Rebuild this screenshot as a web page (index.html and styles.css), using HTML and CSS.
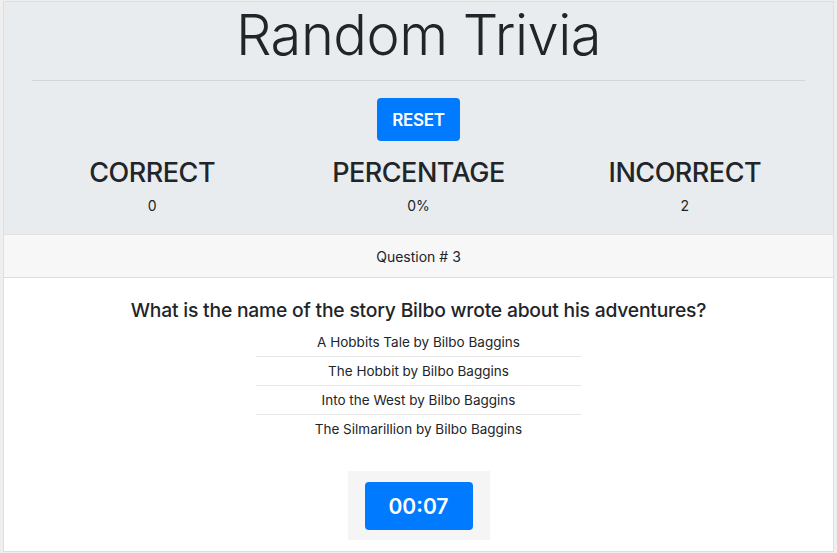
FILE: index.html
```html
<!DOCTYPE html>
<html>
<head>
<meta charset="utf-8">
<link rel="stylesheet" href="styles.css">
</head>
<body>
<div class="card">
  <div class="jumbo">
    <h1 class="title">Random Trivia</h1>
    <hr class="rule">
    <div class="reset-wrap"><button class="btn reset">RESET</button></div>
    <div class="stats">
      <div class="stat"><h2>CORRECT</h2><p>0</p></div>
      <div class="stat"><h2>PERCENTAGE</h2><p>0%</p></div>
      <div class="stat"><h2>INCORRECT</h2><p>2</p></div>
    </div>
  </div>
  <div class="card-header">Question # 3</div>
  <div class="card-body">
    <h3 class="question">What is the name of the story Bilbo wrote about his adventures?</h3>
    <ul class="answers">
      <li>A Hobbits Tale by Bilbo Baggins</li>
      <li>The Hobbit by Bilbo Baggins</li>
      <li>Into the West by Bilbo Baggins</li>
      <li>The Silmarillion by Bilbo Baggins</li>
    </ul>
    <div class="timer-box"><div class="btn timer">00:07</div></div>
  </div>
</div>
</body>
</html>
```
FILE: styles.css
```css
* { box-sizing: border-box; }
html, body { margin: 0; padding: 0; }
body {
  background: #efefef;
  padding: 1px 3px 1px 3px;
  font-family: Inter, "Noto Sans", "Liberation Sans", sans-serif;
  color: #212529;
}
.card {
  background: #fff;
  border: 1px solid #dedede;
  height: 551px;
  display: flex;
  flex-direction: column;
}
.jumbo {
  background: #e9ecef;
  height: 232px;
  padding: 0 28px;
  text-align: center;
}
.title {
  margin: 0 0 12px;
  font-size: 56px;
  font-weight: 300;
  line-height: 66px;
  letter-spacing: -0.5px;
}
.rule {
  margin: 0;
  border: 0;
  border-top: 1px solid #d3d6d9;
}
.reset-wrap { padding-top: 17px; }
.btn {
  display: inline-flex;
  align-items: center;
  justify-content: center;
  background: #007bff;
  color: #fff;
  border: 0;
  border-radius: 4px;
  font-family: inherit;
}
.reset {
  width: 83px;
  height: 43px;
  font-size: 17px;
  font-weight: 600;
  letter-spacing: -0.3px;
}
.stats {
  display: grid;
  grid-template-columns: 1fr 1fr 1fr;
  margin: 0 -13px;
  padding-top: 15px;
}
.stat h2 {
  margin: 0;
  font-size: 27px;
  font-weight: 500;
  line-height: 34px;
  letter-spacing: -0.5px;
}
.stat p {
  margin: 7px 0 0;
  font-size: 14px;
  line-height: 18px;
}
.card-header {
  background: #f7f7f7;
  border-top: 1px solid #e2e2e2;
  border-bottom: 1px solid #dedede;
  height: 44px;
  display: flex;
  align-items: center;
  justify-content: center;
  font-size: 14px;
}
.card-body {
  flex: 1;
  text-align: center;
  padding-top: 19px;
}
.question {
  margin: 0;
  font-size: 19.3px;
  font-weight: 500;
  line-height: 26px;
  letter-spacing: -0.2px;
}
.answers {
  list-style: none;
  margin: 5px auto 0;
  padding: 0;
  width: 325px;
}
.answers li {
  font-size: 13.5px;
  line-height: 28px;
  border-top: 1px solid #e6e6e6;
}
.answers li:first-child { border-top: 0; }
.timer-box {
  margin: 28px auto 0;
  width: 142px;
  height: 69px;
  background: #f5f5f5;
  padding-top: 11px;
}
.timer {
  width: 108px;
  height: 48px;
  font-size: 21px;
  font-weight: 600;
}
```
